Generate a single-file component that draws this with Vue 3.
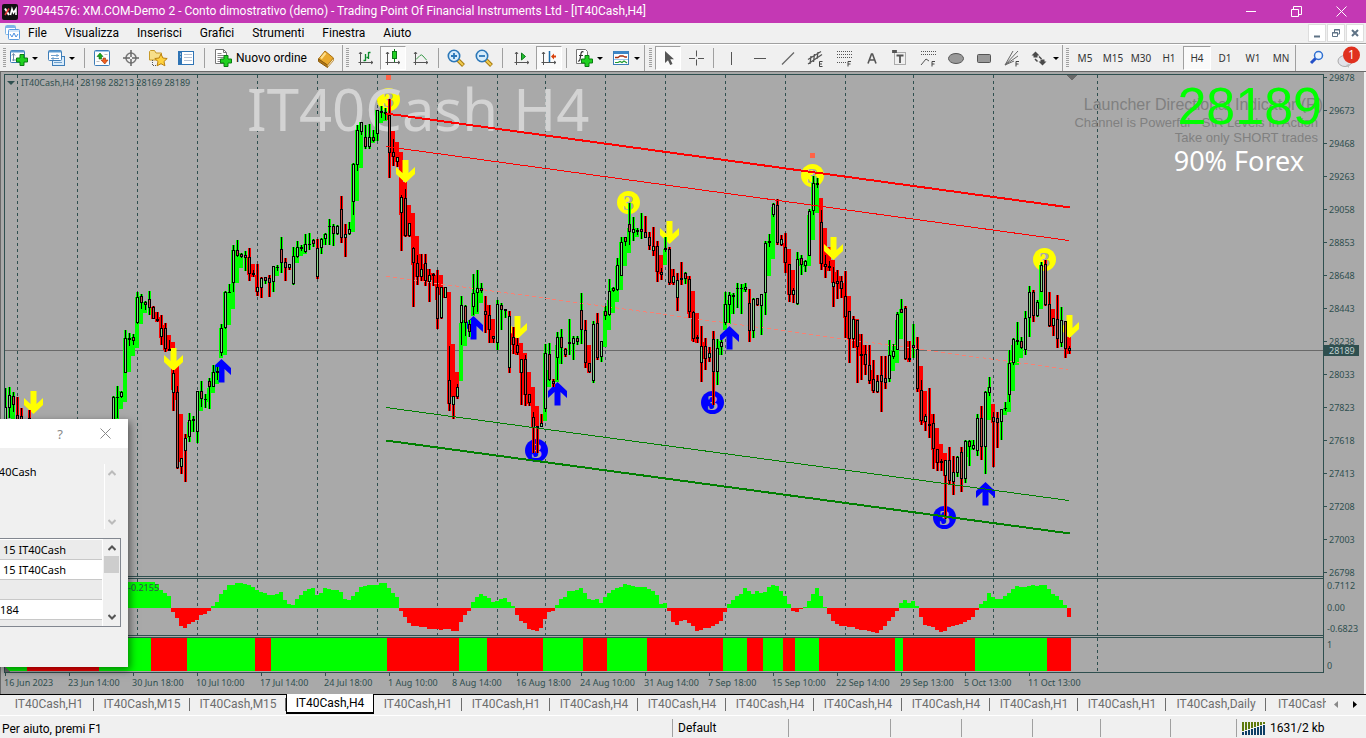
<script setup>
const menus = ['File', 'Visualizza', 'Inserisci', 'Grafici', 'Strumenti', 'Finestra', 'Aiuto']

const tools = [
  { k: 'grip', w: 8 },
  { k: 'icon', id: 'newchart', w: 31, drop: true, t: 'Nuovo grafico' },
  { k: 'icon', id: 'profiles', w: 43, drop: true, t: 'Profili' },
  { k: 'sep', w: 5 },
  { k: 'icon', id: 'market', w: 30, t: 'Market Watch' },
  { k: 'icon', id: 'target', w: 27, t: 'Finestra dati' },
  { k: 'icon', id: 'favs', w: 28, t: 'Navigatore' },
  { k: 'icon', id: 'terminal', w: 28, t: 'Terminale' },
  { k: 'sep', w: 9 },
  { k: 'icon', id: 'order', w: 102, label: 'Nuovo ordine', t: 'Nuovo ordine' },
  { k: 'icon', id: 'book', w: 31, t: 'MetaEditor' },
  { k: 'grip', w: 10, edge: true },
  { k: 'icon', id: 'bars', w: 28, t: 'Grafico a barre' },
  { k: 'icon', id: 'candles', w: 26, on: true, t: 'Candele' },
  { k: 'icon', id: 'line', w: 30, t: 'Grafico a linea' },
  { k: 'sep', w: 5 },
  { k: 'icon', id: 'zoomin', w: 29, t: 'Zoom avanti' },
  { k: 'icon', id: 'zoomout', w: 28, t: 'Zoom indietro' },
  { k: 'sep', w: 9 },
  { k: 'icon', id: 'scroll', w: 29, t: 'Scorrimento automatico' },
  { k: 'icon', id: 'shift', w: 26, on: true, t: 'Spostamento grafico' },
  { k: 'sep', w: 9 },
  { k: 'icon', id: 'indic', w: 35, drop: true, t: 'Indicatori' },
  { k: 'icon', id: 'templ', w: 38, drop: true, t: 'Modelli' },
  { k: 'grip', w: 11, edge: true },
  { k: 'icon', id: 'pointer', w: 26, on: true, t: 'Cursore' },
  { k: 'icon', id: 'cross', w: 29, t: 'Mirino' },
  { k: 'sep', w: 7 },
  { k: 'icon', id: 'vline', w: 29, t: 'Linea verticale' },
  { k: 'icon', id: 'hline', w: 28, t: 'Linea orizzontale' },
  { k: 'icon', id: 'trend', w: 28, t: 'Trendline' },
  { k: 'icon', id: 'channel', w: 28, t: 'Canale' },
  { k: 'icon', id: 'fibo', w: 28, t: 'Fibonacci' },
  { k: 'icon', id: 'texta', w: 28, t: 'Testo' },
  { k: 'icon', id: 'labelt', w: 28, t: 'Etichetta' },
  { k: 'icon', id: 'expans', w: 28, t: 'Espansione' },
  { k: 'icon', id: 'ellipse', w: 28, t: 'Ellisse' },
  { k: 'icon', id: 'rect', w: 28, t: 'Rettangolo' },
  { k: 'icon', id: 'fan', w: 28, t: 'Ventaglio' },
  { k: 'icon', id: 'arrows', w: 36, drop: true, t: 'Frecce' },
  { k: 'grip', w: 9, edge: true },
  ...['M5', 'M15', 'M30', 'H1', 'H4', 'D1', 'W1', 'MN'].map((p) => ({ k: 'period', label: p, w: 28, on: p === 'H4' })),
  { k: 'end', w: 3, edge: true },
]

const prices = [29878, 29673, 29468, 29263, 29058, 28853, 28648, 28443, 28238, 28033, 27823, 27618, 27413, 27208, 27003, 26798]
const times = ['16 Jun 2023', '23 Jun 14:00', '30 Jun 18:00', '10 Jul 10:00', '17 Jul 14:00', '24 Jul 18:00', '1 Aug 10:00', '8 Aug 14:00', '16 Aug 18:00', '24 Aug 10:00', '31 Aug 14:00', '7 Sep 18:00', '15 Sep 10:00', '22 Sep 14:00', '29 Sep 13:00', '5 Oct 13:00', '11 Oct 13:00']
const grid = [17, 77, 137, 197, 257, 317, 377, 437, 497, 545, 605, 665, 725, 785, 845, 913, 993, 1097]

// Each candle: high low bodyTop bodyBottom, u/d body + G/R trend, then optional trend band top bottom.
const series = [
  [5, `388 420 407 420 uG;387 418 395 408 uG;392 412 396 405 dG 396 419;397 420 415 420 dR;408 420 416 420 dR`],
  [29, `410 420 418 420 dR`],
  [113, `396 420 397 420 uG;386 418 397 398 dG 397 419;391 398 392 397 uG 391 409;330 373 338 373 uG 338 402;333 346 338 340 dG 338 372;334 345 337 341 dG 337 356;292 324 297 323 uG 297 348;294 309 296 303 dG 296 324;301 310 302 305 dG 302 313;291 315 299 308 dG;306 319 307 319 dR 307 319;312 322 319 321 dR 312 322;315 345 328 337 uR 317 338;323 352 328 349 dR 325 350;340 350 349 351 dR 335 351;370 411 373 393 uR 342 390;386 469 392 468 dR 365 400;458 474 458 467 uR 414 462;434 482 438 451 uR;413 442 420 437 uG 422 438;416 432 419 421 dG 420 432;391 443 391 432 uG;381 407 391 399 dG 391 411;394 408 399 400 dG;378 409 381 387 dG 388 402;365 387 372 387 uG 372 393;367 380 371 373 dG 371 384;324 356 328 353 uG 328 358;291 329 292 328 uG 292 355;284 293 292 293 dG 292 325;245 292 250 283 uG 250 309;240 257 250 256 dG 250 283;253 258 254 257 dG 253 268;251 271 255 258 dG;248 281 257 274 dR 257 275;270 277 273 275 dR 264 277;264 296 287 292 uR 275 292;277 298 278 288 uR;277 284 277 281 dG;275 297 278 283 dR;266 292 266 282 uG;265 271 267 268 dG 267 276;237 273 249 263 dG;258 281 262 268 dR;264 270 264 268 uR;247 285 256 284 uG;241 258 247 257 uG 248 263;245 251 247 249 dG 247 256;234 253 244 252 uG 244 254;233 250 244 245 dG;239 247 240 244 dG;239 279 248 277 uR;238 254 239 248 uG;233 245 234 239 uG 234 245;219 245 226 227 dG;224 246 226 234 dG;225 235 226 234 uG;196 243 209 238 dR;224 257 234 238 uR;222 235 229 234 uG;163 215 164 202 uG 164 232;125 171 130 165 uG 130 201;122 135 122 132 uG 122 168;125 149 137 147 dG;124 149 137 147 uG;130 142 137 141 dG 137 143;110 141 110 134 uG 110 141;106 118 111 113 dG 111 123;108 120 112 114 dG 112 121;99 178 115 153 dR 115 120;139 166 152 157 dR 131 157;157 167 157 162 uR 142 162;195 251 197 213 uR 152 215;189 237 198 236 dR 182 236;223 237 223 236 uR 205 236;247 307 248 263 dR 213 265;255 285 263 277 dR 236 277;254 281 269 277 uR 254 277;254 286 263 281 dR 264 281;269 302 275 282 uR 269 282;273 286 274 276 dR 273 280;270 329 287 319 dR 275 300;287 319 287 318 uR 275 295;287 298 287 298 uR 287 298;346 411 380 404 dR 292 404;396 419 396 405 uR 344 397;384 399 387 397 uR 372 397;296 345 305 323 uG 323 381;305 336 306 323 dG 320 346;320 337 324 332 dG;274 315 293 307 uG 293 316;270 312 288 293 uG 290 314;283 293 288 291 dG 288 303;296 333 311 315 dR;305 343 315 330 dR 305 330;336 343 336 339 dR 319 343;300 350 304 343 uG;303 330 305 310 dG;309 318 309 311 dG;311 373 316 368 uR;327 354 337 345 dR 327 345;338 355 345 353 dR 338 355;359 405 359 373 uR 343 373;355 406 359 395 dR 353 395;394 406 394 403 dR 372 404;412 453 417 428 dR 387 428;426 453 426 428 uR 406 426;414 427 423 427 uR;344 412 353 409 uG 353 421;343 381 354 380 dG 370 387;379 387 381 384 dR;332 380 337 358 uG 345 382;329 364 337 348 dG 337 364;348 357 349 355 dR;319 355 342 344 dG;336 360 338 344 uG;336 345 338 342 dG;293 344 310 330 dG;320 368 330 363 dR;363 373 363 372 dR 345 373;321 383 324 381 uG;313 360 323 358 dR;341 362 341 357 uG;306 320 311 316 dG 311 347;279 316 291 315 uG 300 330;287 292 288 291 dG 288 313;258 291 265 290 uG 266 302;237 276 242 276 uG 242 290;237 246 237 242 dG 237 266;203 245 224 232 dG 228 253;217 241 229 233 uG;228 235 230 232 dG 228 237;213 239 229 232 dG;216 238 232 238 dR;232 250 237 246 dR;227 256 246 251 uR;241 282 246 272 dR 246 272;268 280 272 275 dR 255 274;237 252 248 250 dG 249 265;247 285 249 283 dR;269 285 276 283 uR 269 284;273 311 280 298 uR;262 285 278 280 dR;272 284 273 279 dG;276 318 279 312 dR 276 314;311 342 312 339 dR 291 341;335 343 337 339 dR 313 343;326 382 346 363 uR;338 370 346 359 dR 342 359;347 362 353 358 uR;331 405 339 372 dR;339 385 348 372 uG;340 355 342 347 uG 341 355;292 325 304 323 uG 304 330;292 323 295 305 uG 300 324;293 314 295 297 dG 294 314;283 308 288 289 dG;284 314 288 289 dG;283 292 287 290 uG 284 292;289 342 303 331 dR;298 338 299 331 uG;298 306 298 305 dR;294 335 294 306 uG;241 315 243 293 uG;234 247 241 243 dG 241 276;203 217 204 215 uG 207 259;199 245 205 243 dR;235 246 239 245 uR;233 273 247 263 dR 243 263;264 302 264 295 dR 249 295;288 303 290 295 uR 270 295;252 305 259 304 uG;255 275 258 265 dG 258 266;260 272 261 266 uG 261 267;209 256 211 256 uG 215 266;176 215 183 211 uG 183 240;178 188 183 185 dG 183 213;210 270 222 264 dR 198 264;255 278 264 267 dR 228 267;261 271 266 268 dR 247 271;267 307 282 287 uR 260 283;270 299 281 284 dR 272 284;276 298 281 289 dR 276 289;271 338 296 317 dR 283 318;311 363 311 339 dR 296 340;316 348 319 339 uR;320 383 320 347 dR 319 348;334 380 354 356 dR 334 356;345 375 354 365 dR 345 365;345 384 365 381 dR;360 393 379 391 dR 370 391;375 393 381 392 uR;356 412 375 382 dR;356 389 378 383 dR;340 382 355 379 uG;344 359 351 357 uG 351 371;312 350 314 350 uG 320 363;299 313 309 313 dG 309 339;306 360 308 359 dR;341 362 358 360 dR 341 362;324 358 345 348 dG;337 392 349 389 dR;380 425 390 421 dR 366 422;414 431 416 422 uR 391 423;388 438 424 426 dR;414 469 423 449 dR 414 450;449 471 449 463 dR 428 463;459 471 461 463 dR 444 463;460 519 460 476 uR 453 476;447 485 460 481 dR;456 495 472 482 uR;456 477 457 473 uG;447 492 452 479 dR;440 483 441 479 uG;440 466 441 447 dG 441 457;440 450 445 449 uG 440 450;414 456 418 451 uG;406 460 418 447 dR;391 474 392 447 uG;377 396 387 393 uG 387 420;412 467 417 422 dR 404 423;412 448 418 423 dR;409 440 409 422 uG;402 411 408 409 dG 408 415;350 402 363 395 uG 363 412;338 365 339 363 uG 345 391;322 345 340 342 dG 341 365;337 349 341 348 dG 341 358;311 355 318 350 uG;286 337 292 318 uG;290 322 292 316 dR;300 317 302 316 uG;262 292 265 292 uG 265 309;260 306 264 305 dR;292 327 304 326 dR;318 336 318 326 uR 309 327;295 348 319 339 dR;307 347 320 343 uG;321 358 321 349 dR;346 354 348 351 dR 337 354`],
]
const candles = series.flatMap(([x0, text]) =>
  text.split(';').map((row, i) => {
    const f = row.trim().split(' ')
    const n = f.map(Number)
    return {
      x: x0 + i * 4,
      hi: n[0], lo: n[1], top: n[2], bot: n[3],
      body: f[4][0], trend: f[4][1],
      bandTop: n[5] || 0, bandBot: n[6] || 0,
    }
  }),
)
const bands = candles.filter((c) => c.bandTop)

const histGroups = [
  [127, [26, 26, 26, 26, 26, 26, 26, 24, 18, 15, 12, -4, -10, -18, -20, -16, -14, -12, -7, -6, -3, 2, 6, 14, 18, 23, 23, 25, 25, 24, 23, 21, 18, 16, 15, 13, 13, 14, 16, 8, 4, 3, 9, 13, 17, 19, 20, 13, 15, 20, 19, 18, 18, 16, 9, 8, 12, 16, 21, 22, 23, 23, 23, 25, 25, 20, 15, 11, -3, -9, -15, -18, -18, -19, -19, -21, -21, -21, -22, -21, -21]],
  [451, [-23, -23, -14, -7, -3, 6, 11, 14, 12, 10, 6, 7, 9, 10, 6, 2, -7, -13, -15, -21, -22, -23, -20, -11, -4, -3, 3, 9, 11, 17, 17, 18, 20, 15, 9, 8, 9, 5, 11, 15, 18, 20, 21, 24, 23, 22, 21, 21, 21, 19, 17, 13, 4, 5, -3, -14, -17, -13, -12, -15, -18, -23, -22, -20, -20, -18, -16, -13, -4, 4, 8, 12, 14, 20, 17, 14, 17, 15, 16, 21, 23, 22, 17, 12, 4, -3, -4, -1, 1, 7, 14, 20, 12, 1, -6, -13, -16, -18, -18, -19, -19, -21, -22, -22, -23, -24, -25, -22, -18, -13, -9, -3, 5, 8]],
  [907, [5, 7, 2, -9, -17, -18, -19, -22, -24, -23, -19, -18, -17, -16, -14, -12, -9, -2, 4, 7, 15, 11, 9, 9, 12, 15, 19, 22, 21, 21, 22, 23, 22, 23, 23, 19, 14, 12, 8, 3, -9]],
]
const hist = histGroups.flatMap(([x0, vals]) => vals.map((v, i) => ({ x: x0 + i * 4, v })))

const edges = [5, 27, 99, 151, 187, 255, 271, 387, 459, 487, 543, 583, 607, 647, 723, 747, 763, 783, 795, 819, 895, 903, 975, 1047, 1071]
const strip = edges.slice(0, -1).map((x, i) => ({ x, w: edges[i + 1] - x, up: i % 2 === 0 }))

const downs = [[33, 414], [173, 371], [405, 183], [517, 339], [669, 244], [833, 260], [1069, 338]]
const ups = [[221, 359], [473, 316], [557, 382], [729, 326], [985, 482]]
const tops = [[388, 99], [628, 202], [812, 175], [1044, 259]]
const lows = [[536, 450], [712, 402], [944, 517]]

const tabs = [
  { n: 'IT40Cash,H1', w: 90 }, { n: 'IT40Cash,M15', w: 96 }, { n: 'IT40Cash,M15', w: 96 },
  { n: 'IT40Cash,H4', w: 88, on: true }, { n: 'IT40Cash,H1', w: 88 }, { n: 'IT40Cash,H1', w: 88 },
  { n: 'IT40Cash,H4', w: 88 }, { n: 'IT40Cash,H4', w: 88 }, { n: 'IT40Cash,H4', w: 88 },
  { n: 'IT40Cash,H4', w: 88 }, { n: 'IT40Cash,H4', w: 88 }, { n: 'IT40Cash,H1', w: 88 },
  { n: 'IT40Cash,H1', w: 88 }, { n: 'IT40Cash,Daily', w: 100 },
]
const cells = [116, 102, 71, 71, 68, 70, 66]
</script>

<template>
  <div class="app">
    <svg class="defs" aria-hidden="true">
      <symbol id="plus" viewBox="0 0 12 12"><path d="M4 .5h4v3.500h3.500v4H8v3.500H4V8H.5V4H4z" fill="#1fd01f" stroke="#0a7d12" /></symbol>
      <symbol id="newchart" viewBox="0 0 20 20">
        <rect x="1.500" y="2.500" width="14" height="12" rx="1" fill="#fff" stroke="#3d7db8" /><path d="M2 3.500h13" stroke="#5b9ad0" stroke-width="2" />
        <path d="M4.500 6v7M3 7.500l1.500-2L6 7.500M3 12h8M10 10.500l1.500 1.500-1.500 1.500" stroke="#6f8da8" fill="none" />
        <use href="#plus" x="7" y="6" width="12" height="12" />
      </symbol>
      <symbol id="profiles" viewBox="0 0 20 20">
        <rect x="6.500" y="8.500" width="12" height="9" fill="#d9ebfa" stroke="#3d7db8" />
        <rect x="2.500" y="2.500" width="13" height="10" rx="1" fill="#fff" stroke="#3d7db8" /><path d="M3 3.500h12" stroke="#5b9ad0" stroke-width="2" />
        <path d="M5 7.500h8M5 10.500h8M11 6v3M7 9v3" stroke="#6fa0cc" /><path d="M8 14.500h8" stroke="#6fa0cc" />
      </symbol>
      <symbol id="market" viewBox="0 0 20 20">
        <rect x="2.500" y="2.500" width="15" height="15" rx="1" fill="#fdfdfd" stroke="#3d7db8" /><path d="M3 3.500h14" stroke="#9cc6ea" />
        <path d="M5 8.500L8 5l3 3.500H9.500V11H7V8.500z" fill="#18a818" stroke="#0b6b0b" stroke-width=".6" /><path d="M9 12h2v-2h2.500v2H16l-3.200 4z" fill="#f06020" stroke="#a03008" stroke-width=".6" />
        <path d="M4.500 13.500h3M12.500 6.500h3" stroke="#bbb" />
      </symbol>
      <symbol id="target" viewBox="0 0 20 20"><circle cx="10" cy="10" r="5" fill="none" stroke="#777" stroke-width="1.500" /><path d="M10 2v7M10 11v7M2 10h7M11 10h7" stroke="#666" stroke-width="1.500" /></symbol>
      <symbol id="favs" viewBox="0 0 20 20">
        <path d="M1.500 3.500V12h12V5H8L6.500 2.500h-4z" fill="#f7df8a" stroke="#c79a28" /><path d="M4.500 12v5.500h4" fill="none" stroke="#555" stroke-dasharray="1 1" />
        <path d="M13 6l1.900 4 4.300.500-3.200 3 .9 4.300L13 15.700l-3.900 2.100.9-4.300-3.200-3 4.300-.500z" fill="#ffd23e" stroke="#b97f10" />
      </symbol>
      <symbol id="terminal" viewBox="0 0 20 20"><rect x="2.500" y="3.500" width="15" height="13" fill="#fff" stroke="#2f74b5" /><path d="M3 4h3v12H3z" fill="#2f74b5" /><path d="M8 6.500h8M8 9.500h8M8 12.500h8" stroke="#b6c2d4" /><path d="M4 6h1M4 9h1" stroke="#fff" /></symbol>
      <symbol id="order" viewBox="0 0 20 20">
        <path d="M2.500 1.500h8l3 3v11h-11z" fill="#fff" stroke="#777" /><path d="M10.500 1.500v3h3" fill="none" stroke="#777" /><path d="M4.500 5.500h4M4.500 7.500h7M4.500 9.500h7M4.500 11.500h4M4.500 13.500h3" stroke="#888" />
        <use href="#plus" x="7" y="7" width="12" height="12" />
      </symbol>
      <symbol id="book" viewBox="0 0 20 20"><path d="M1.500 11L8 3l8.500 7-6 7.500z" fill="#e9a92d" stroke="#a87012" /><path d="M1.500 11v2.500l9 6V17z" fill="#b27815" stroke="#8a5a0c" /><path d="M10.500 17.200l6-7.200v2.500l-6 7z" fill="#f5e3b5" stroke="#a87012" stroke-width=".7" /><path d="M4 10.500L8.500 5" stroke="#ffe08a" stroke-width="2" /></symbol>
      <symbol id="axes" viewBox="0 0 20 20"><path d="M4.500 4v13M2.500 14.500H17M3 6l1.500-2L6 6M15 13l2 1.500-2 1.500" fill="none" stroke="#555" /></symbol>
      <symbol id="bars" viewBox="0 0 20 20"><use href="#axes" /><path d="M9.500 6v7M7.500 12.500h2M12.500 4v7M12.500 4.500h2M10.500 9.500h2" stroke="#0b8a2a" stroke-width="1.300" /></symbol>
      <symbol id="candles" viewBox="0 0 20 20"><use href="#axes" /><path d="M11.500 1v13" stroke="#0b7a1a" /><rect x="9.500" y="3.500" width="4" height="7" fill="#22d022" stroke="#0b7a1a" /></symbol>
      <symbol id="line" viewBox="0 0 20 20"><use href="#axes" /><path d="M5 11.500l4-4q1.500-1.500 3 .500l3.500 4" fill="none" stroke="#3a9a4a" /></symbol>
      <symbol id="glass" viewBox="0 0 20 20"><path d="M12 12l5.500 5.500" stroke="#a87a10" stroke-width="4" /><path d="M12 12l5 5" stroke="#f0cc50" stroke-width="2" /><circle cx="8" cy="8" r="5.700" fill="#d6ecfb" stroke="#2b77b8" stroke-width="1.600" /></symbol>
      <symbol id="zoomin" viewBox="0 0 20 20"><use href="#glass" /><path d="M5 8h6M8 5v6" stroke="#2b77b8" stroke-width="1.800" /></symbol>
      <symbol id="zoomout" viewBox="0 0 20 20"><use href="#glass" /><path d="M5 8h6" stroke="#2b77b8" stroke-width="1.800" /></symbol>
      <symbol id="scroll" viewBox="0 0 20 20"><use href="#axes" /><path d="M9.500 5l4 3.500-4 3.500z" fill="#22c02f" stroke="#0b7a1a" /></symbol>
      <symbol id="shift" viewBox="0 0 20 20"><use href="#axes" /><path d="M10.500 3v11" stroke="#1b6aa8" stroke-width="1.500" /><path d="M12 8.500l3-3v2h2v2h-2v2z" fill="#d8410c" /></symbol>
      <symbol id="indic" viewBox="0 0 20 20">
        <path d="M2.500 1.500h9l2 2v12h-11z" fill="#fff" stroke="#777" /><path d="M9.500 4q-2-1-2.500 1.500l-1 6q-.500 2-2 1.500M5 7.500h4" fill="none" stroke="#333" stroke-width="1.200" />
        <use href="#plus" x="7" y="7" width="12" height="12" />
      </symbol>
      <symbol id="templ" viewBox="0 0 20 20"><rect x="2.500" y="3.500" width="15" height="13" fill="#fff" stroke="#3d7db8" /><path d="M3 4.500h14" stroke="#3d86c6" stroke-width="3" /><path d="M3 11.500h14" stroke="#9cc6ea" /><path d="M4 9.500h3l2-1.500h3l2 1h2" fill="none" stroke="#a83010" stroke-width="1.300" /><path d="M4 14.500h3l2-1 2 1 2-1.500 3 2" fill="none" stroke="#1f9a2f" stroke-width="1.200" /></symbol>
      <symbol id="pointer" viewBox="0 0 20 20"><path d="M7 3v12l3-2.800 2.200 4.800 2.300-1-2.200-4.700H16z" fill="#555" /></symbol>
      <symbol id="cross" viewBox="0 0 20 20"><path d="M10.500 2.500v6M10.500 11.500v6M3 10.500h6M12 10.500h6" stroke="#555" /></symbol>
      <symbol id="vline" viewBox="0 0 20 20"><path d="M9.500 4v13" stroke="#555" /></symbol>
      <symbol id="hline" viewBox="0 0 20 20"><path d="M4 10.500h12" stroke="#555" /></symbol>
      <symbol id="trend" viewBox="0 0 20 20"><path d="M4 16.500L16 4.500" stroke="#666" stroke-width="1.300" /></symbol>
      <symbol id="channel" viewBox="0 0 20 20"><path d="M2 11.500L15 3.500M2 16L16 6.500M5 8l-1 8M8.500 6l-1 8M12 4l-1 7" stroke="#555" stroke-width="1.300" /><path d="M16.500 13.500h-3v5h3M13.500 16h2.500" fill="none" stroke="#444" /></symbol>
      <symbol id="dots" viewBox="0 0 20 20"><path d="M3 3.500h15M3 6.500h15M3 9.500h15" stroke="#555" stroke-dasharray="1 1" /></symbol>
      <symbol id="fibo" viewBox="0 0 20 20"><use href="#dots" /><path d="M3 14.500h9" stroke="#555" stroke-dasharray="1 1" /><path d="M17 13.500h-3v5M14 16h2.500" fill="none" stroke="#444" /></symbol>
      <symbol id="texta" viewBox="0 0 20 20"><path d="M6 15.500L9.500 6h1L14 15.500M7.500 12h5" fill="none" stroke="#555" stroke-width="1.600" /></symbol>
      <symbol id="labelt" viewBox="0 0 20 20"><rect x="4.500" y="4.500" width="11" height="12" fill="none" stroke="#666" stroke-dasharray="1 1" /><path d="M6.500 7.500h7M10 7v8M3 3h3v1H3z" stroke="#555" stroke-width="1.800" /></symbol>
      <symbol id="expans" viewBox="0 0 20 20"><path d="M3 3.500h15M3 6.500h15" stroke="#555" stroke-dasharray="1 1" /><path d="M3 17l5-6 3 2" fill="none" stroke="#555" /><path d="M17 13.500h-3v5M14 16h2.500" fill="none" stroke="#444" /></symbol>
      <symbol id="ellipse" viewBox="0 0 20 20"><ellipse cx="10" cy="10.500" rx="7.500" ry="5" fill="#999" stroke="#555" /></symbol>
      <symbol id="rect" viewBox="0 0 20 20"><rect x="3.500" y="6.500" width="13" height="8" rx="1" fill="#999" stroke="#555" /></symbol>
      <symbol id="fan" viewBox="0 0 20 20"><path d="M3 17L16 3M3 17L11 3M3 17L16 8M3 17l9-4" stroke="#666" /><path d="M17 13.500h-3v5M14 16h2.500" fill="none" stroke="#444" /></symbol>
      <symbol id="arrows" viewBox="0 0 20 20"><path d="M5.500 3.500L9.500 7.500H7.500v2h-4v-2h-2zM12.500 17.500l-4-4h2v-2h4v2h2z" fill="#4a4a4a" /><path d="M5 11l2.500 2.500M9 8.500l2.500 2.500" stroke="#4a4a4a" stroke-width="1.500" /></symbol>
    </svg>

    <header class="title">
      <svg class="logo" width="16" height="16" viewBox="0 0 16 16"><rect width="16" height="16" rx="2" fill="#111" /><path d="M3 4.500l4 6.500" stroke="#fff" stroke-width="2" /><path d="M7 4.500L3 11" stroke="#e23b3b" stroke-width="1.600" /><path d="M8.500 11L10 5l1.500 4L14 5v6" fill="none" stroke="#fff" stroke-width="1.600" /></svg>
      <h1>79044576: XM.COM-Demo 2 - Conto dimostrativo (demo) - Trading Point Of Financial Instruments Ltd - [IT40Cash,H4]</h1>
      <button class="win" aria-label="Riduci"><svg width="11" height="11"><path d="M0 5.500h10" stroke="#fff" /></svg></button>
      <button class="win" aria-label="Ripristina"><svg width="11" height="11"><path d="M.5 3.500h7v7h-7zM2.500 3V.5h8v8H8" fill="none" stroke="#fff" /></svg></button>
      <button class="win" aria-label="Chiudi"><svg width="11" height="11"><path d="M.5.5l10 10M10.500.5l-10 10" stroke="#fff" /></svg></button>
    </header>

    <nav class="menu">
      <svg class="mdi-icon" width="16" height="16"><rect x=".5" y=".5" width="10" height="9" rx="1" fill="#fff" stroke="#7db4e6" /><path d="M1 2h9" stroke="#7db4e6" stroke-width="2" /><rect x="3.500" y="4.500" width="11" height="10" rx="1" fill="#fff" stroke="#5a9be0" /><path d="M4 6h10" stroke="#a9d0f5" /><path d="M5 9l2 3 2-4 2 4 2-3" fill="none" stroke="#4a90e2" /></svg>
      <a v-for="m in menus" :key="m" href="#">{{ m }}</a>
      <span class="spring"></span>
      <button class="mdi" aria-label="Riduci grafico"><svg width="10" height="10"><path d="M2 8.500h6" stroke="#5f7386" stroke-width="2" /></svg></button>
      <button class="mdi" aria-label="Ripristina grafico"><svg width="10" height="10"><path d="M1.500 4.500h5v4h-5zM3.500 4V1.500h5V6H7" fill="none" stroke="#5f7386" /><path d="M1 5h6M3 2h6" stroke="#5f7386" /></svg></button>
      <button class="mdi" aria-label="Chiudi grafico"><svg width="10" height="10"><path d="M2 2l6 6M8 2L2 8" stroke="#5f7386" stroke-width="2" /></svg></button>
    </nav>

    <div class="toolbar">
      <template v-for="(t, i) in tools" :key="i">
        <button v-if="t.k === 'icon' || t.k === 'period'" class="tool" :class="{ on: t.on, period: t.k === 'period' }" :style="{ width: t.w + 'px' }" :aria-label="t.t || t.label">
          <svg v-if="t.k === 'icon'" width="20" height="20"><use :href="'#' + t.id" /></svg>
          <span v-if="t.label">{{ t.label }}</span>
          <i v-if="t.drop" class="caret"></i>
        </button>
        <span v-else :class="[t.k, { edge: t.edge }]" :style="{ width: t.w + 'px' }"></span>
      </template>
      <button class="tool search" aria-label="Cerca"><svg width="16" height="16"><circle cx="9.500" cy="5.500" r="4" fill="#eaf4ff" stroke="#2f6fd0" stroke-width="1.500" /><path d="M6.500 8.500L2 13" stroke="#2450c8" stroke-width="3" /></svg></button>
      <button class="tool alerts" aria-label="Notifiche"><svg width="24" height="24"><ellipse cx="8" cy="15" rx="7" ry="5.500" fill="#e2e2e8" stroke="#aaa" /><path d="M9 19l3 3 0-4z" fill="#bbb" /><circle cx="14.500" cy="9" r="8.500" fill="#e0301e" /></svg><b>1</b></button>
    </div>

    <main class="chart">
      <div class="plot">
        <svg class="canvas" shape-rendering="crispEdges">
          <g transform="translate(-5,-75)">
            <g class="grid"><path v-for="x in grid" :key="x" :d="`M${x}.500 75V576M${x}.500 579V635M${x}.500 638V672`" /></g>
            <g>
              <g v-for="(p, i) in tops" :key="'t' + i" shape-rendering="auto"><circle :cx="p[0] + .5" :cy="p[1] + .5" r="11.500" fill="#ff0" /><text class="num" :x="p[0] + .5" :y="p[1] + 8">3</text></g>
              <g v-for="(p, i) in lows" :key="'l' + i" shape-rendering="auto"><circle :cx="p[0] + .5" :cy="p[1] + .5" r="11.500" fill="#00f" /><text class="num" :x="p[0] + .5" :y="p[1] + 8">3</text></g>
              <text class="mark" x="247" y="131">IT40Cash H4</text>
            </g>
            <path d="M5 350.500H2000" stroke="#696969" />
            <path d="M386 75h5v5h-5zM810 153h5v5h-5z" fill="#ff6347" />
            <rect v-for="(c, i) in bands" :key="'b' + i" :x="c.x - 2" :y="c.bandTop" width="4" :height="c.bandBot - c.bandTop" :class="c.trend" />
            <g fill="#ff0" shape-rendering="auto"><path v-for="(p, i) in downs" :key="i" :transform="`translate(${p[0] + .5},${p[1]})`" d="M-3-23h6v13l6.500-6v7L0 0l-9.500-9v-7l6.500 6z" /></g>
            <g fill="#00f" shape-rendering="auto"><path v-for="(p, i) in ups" :key="i" :transform="`translate(${p[0] + .5},${p[1]})`" d="M-3 23.500h6V10l6.500 6V9L0 0l-9.500 9v7l6.500-6z" /></g>
            <rect v-for="(c, i) in candles" :key="'w' + i" :x="c.x - 1" :y="c.hi" width="3" :height="c.lo - c.hi" :class="c.trend" />
            <path d="M386 276.500L1068 369.500" stroke="#fa8072" stroke-dasharray="4 3" />
            <template v-for="(c, i) in candles" :key="'c' + i">
              <rect :x="c.x" :y="c.hi" width="1" :height="c.lo - c.hi" />
              <rect :x="c.x - 1" :y="c.top" width="3" :height="Math.max(1, c.bot - c.top)" />
              <rect v-if="c.bot - c.top > 2" :x="c.x" :y="c.top + 1" width="1" :height="c.bot - c.top - 2" :class="c.body" />
            </template>
            <path d="M386 113.500L1070 207.500" stroke="#f00" stroke-width="2" />
            <path d="M386 146.500L1069 240.500" stroke="#f00" />
            <path d="M386 407.500L1069 500.500" stroke="#008000" />
            <path d="M386 440.500L1070 533.500" stroke="#008000" stroke-width="2" />
            <path d="M1066 75h11l-5.500 5.500z" fill="#696969" />
            <rect v-for="(h, i) in hist" :key="'h' + i" :x="h.x" :y="h.v > 0 ? 608 - h.v : 608" width="4" :height="Math.abs(h.v)" :class="h.v > 0 ? 'G' : 'R'" />
            <rect v-for="(s, i) in strip" :key="'s' + i" :x="s.x" y="638" :width="s.w" height="33" :class="s.up ? 'G' : 'R'" />
            <path d="M5 576.500H2000M5 578.500H2000M5 635.500H2000M5 637.500H2000" stroke="#2f4f4f" />
            <path d="M5 667l5 5H5z" fill="#696969" />
          </g>
        </svg>
        <div class="symbol"><i class="caret"></i><span>IT40Cash,H4</span><span>28198 28213 28169 28189</span></div>
        <span class="reading">-0.2155</span>
        <div class="notes">
          <p class="launcher">Launcher Directional Indicator (R)</p>
          <p>Channel is Powerful - S\R Levels In Action</p>
          <p>Take only SHORT trades</p>
        </div>
        <strong class="quote">28189</strong>
        <span class="forex">90% Forex</span>
      </div>
      <div class="scale">
        <span v-for="p in prices" :key="p" class="price">{{ p }}</span>
        <span class="lvl l1">0.7112</span><span class="lvl l2">0.00</span><span class="lvl l3">-0.6823</span><span class="lvl l4">1</span><span class="lvl l5">0</span>
        <b class="now">28189</b>
      </div>
      <div class="times"><span v-for="t in times" :key="t">{{ t }}</span></div>
    </main>

    <section class="dialog" aria-label="Ordine">
      <div class="dlg-head"><button aria-label="Aiuto">?</button><button aria-label="Chiudi finestra"><svg width="11" height="11"><path d="M.5.5l10 10M10.500.5l-10 10" stroke="#888" /></svg></button></div>
      <div class="dlg-info"><span>IT40Cash</span><div class="dlg-arrows"><svg width="8" height="6"><path d="M.5 5L4 1.500 7.500 5" fill="none" stroke="#bbb" stroke-width="2" /></svg><svg width="8" height="6"><path d="M.5 1L4 4.500 7.500 1" fill="none" stroke="#bbb" stroke-width="2" /></svg></div></div>
      <div class="dlg-list">
        <ul><li>15 IT40Cash</li><li>15 IT40Cash</li><li></li><li class="flush">184</li><li></li></ul>
        <div class="bar"><svg width="8" height="6"><path d="M.5 5L4 1.500 7.500 5" fill="none" stroke="#555" stroke-width="2" /></svg><i></i><svg width="8" height="6"><path d="M.5 1L4 4.500 7.500 1" fill="none" stroke="#555" stroke-width="2" /></svg></div>
      </div>
    </section>

    <div class="tabs">
      <button v-for="(t, i) in tabs" :key="i" :class="{ on: t.on }" :style="{ width: t.w + 'px' }">{{ t.n }}</button>
      <button class="last">IT40Cash,</button>
      <button class="nudge" aria-label="Indietro"><svg width="4" height="7"><path d="M4 0v7L0 3.500z" fill="#888" /></svg></button>
      <button class="nudge" aria-label="Avanti"><svg width="4" height="7"><path d="M0 0v7l4-3.500z" fill="#000" /></svg></button>
    </div>

    <footer class="status">
      <span class="help">Per aiuto, premi F1</span>
      <span v-for="(w, i) in cells" :key="i" class="cell" :style="{ width: w + 'px' }">{{ i === 0 ? 'Default' : '' }}</span>
      <span class="cell net">
        <svg width="24" height="13"><template v-for="n in 8" :key="n"><rect :x="(n - 1) * 3" y="0" width="2" :height="10 - n" fill="#5f7a0c" /><rect :x="(n - 1) * 3" :y="11 - n" width="2" :height="2 + n" fill="#0d3f66" /></template></svg>
        1631/2 kb
      </span>
    </footer>
  </div>
</template>

<style>
html, body, #app { height: 100%; }
body { overflow: hidden; }
</style>

<style scoped>
.app { position: relative; display: flex; flex-direction: column; min-height: 100vh; background: #f0f0f0; color: #000; font: 12px/16px Roboto, "Open Sans", sans-serif; overflow: hidden; }
button { border: 0; padding: 0; margin: 0; background: none; font: inherit; color: inherit; }
.defs { position: absolute; width: 0; height: 0; }
.title { display: flex; align-items: center; height: 23px; background: #c438b4; color: #fff; padding-left: 2px; }
h1 { flex: 1; margin: 0 0 0 5px; font: 400 12px/23px Roboto, "Open Sans", sans-serif; white-space: nowrap; }
.win { width: 45px; height: 20px; display: grid; place-items: center; }
.win:last-child { margin-right: 2px; }
.menu { display: flex; align-items: center; height: 20px; padding: 0 2px 0 5px; border-bottom: 1px solid #a0a0a0; }
.menu a { color: #000; text-decoration: none; margin-right: 18px; }
.mdi-icon { margin-right: 7px; }
.spring { flex: 1; }
.mdi { width: 18px; height: 18px; margin-left: 1px; background: #fff; border: 1px solid #ddd; display: grid; place-items: center; }
.toolbar { display: flex; align-items: center; height: 27px; box-sizing: border-box; border-top: 1px solid #fff; }
.tool { height: 24px; flex: none; display: flex; align-items: center; justify-content: center; gap: 3px; box-sizing: border-box; white-space: nowrap; }
.tool.on { background: #fafafa; border: 1px solid #a0a0a0; border-right-color: #fff; border-bottom-color: #fff; }
.period { font: 10px/14px "Noto Sans", sans-serif; color: #333; }
.caret { width: 0; height: 0; border: solid transparent; border-width: 3px 3px 0; border-top-color: #000; }
.grip, .sep, .end { flex: none; height: 26px; display: flex; align-items: center; justify-content: center; box-sizing: border-box; }
.edge { border-left: 1px solid #a0a0a0; }
.grip::before { content: ""; width: 3px; height: 20px; background: repeating-linear-gradient(#a0a0a0 0 1px, #f0f0f0 1px 2px); }
.sep::before { content: ""; width: 1px; height: 20px; background: #a0a0a0; }
.search { width: 38px; }
.alerts { position: relative; width: 26px; }
.alerts b { position: absolute; left: 12px; top: 1px; font: 12px/16px "Open Sans", sans-serif; color: #fff; }
.chart { flex: 1; display: grid; grid-template-columns: 1fr 42px; grid-template-rows: auto 1fr; background: #a9a9a9; border: solid #696969; border-width: 1px 0 0 1px; box-shadow: inset -2px 0 #f0f0f0; padding: 2px 0 0 3px; color: #2f4f4f; font: 9px/9px "Noto Sans", sans-serif; }
.plot { position: relative; height: 597px; border: 1px solid #2f4f4f; overflow: hidden; }
.canvas { display: block; width: 100%; height: 100%; }
.grid { stroke: #2f4f4f; fill: none; stroke-dasharray: 3 3; }
.G { fill: #0f0; }
.R { fill: #f00; }
.u { fill: #86d686; }
.d { fill: #c05048; }
.num { font: bold 22px "Liberation Serif", serif; fill: #a9a9a9; text-anchor: middle; }
.mark { font: 58px "Noto Sans", sans-serif; fill: #d3d3d3; }
.symbol { position: absolute; left: 2px; top: 3px; display: flex; align-items: center; gap: 6px; white-space: nowrap; }
.symbol .caret { border-width: 4px 4px 0; border-top-color: #2f4f4f; }
.reading { position: absolute; left: 123px; top: 508px; }
.notes { position: absolute; right: 5px; top: 20px; text-align: right; color: #808080; font: 13px/15px "Liberation Sans", Arial, sans-serif; white-space: nowrap; }
.notes p { margin: 0; }
.notes .launcher { font-size: 16px; line-height: 20px; margin-right: -5px; }
.quote { position: absolute; right: 1px; top: 1px; font: 52px/60px "Liberation Sans", Arial, sans-serif; color: #0f0; }
.forex { position: absolute; right: 19px; top: 71px; font: 27px/30px "Noto Sans", sans-serif; color: #fff; }
.scale { position: relative; display: flex; flex-direction: column; gap: 24px; white-space: nowrap; height: 599px; }
.price { display: flex; align-items: center; }
.price::before { content: ""; width: 3px; height: 1px; background: #2f4f4f; margin-right: 2px; }
.price:first-child { margin-top: -1px; }
.lvl { margin-left: 3px; }
.l1 { margin-top: -20px; }
.l2 { margin-top: -11px; }
.l3 { margin-top: -12px; }
.l4 { margin-top: -17px; }
.l5 { margin-top: -12px; }
.now { position: absolute; left: 0; top: 271px; width: 30px; padding: 1px 0 1px 5px; background: #2f4f4f; color: #c0d0d0; font-weight: 400; }
.times { grid-column: 1 / -1; display: flex; }
.times span { width: 64px; flex: none; white-space: nowrap; }
.times span::before { content: ""; display: block; width: 1px; height: 3px; background: #2f4f4f; margin: 0 0 2px 1px; }
.dialog { position: absolute; left: 0; top: 419px; width: 128px; height: 248px; background: #f0f0f0; box-shadow: 2px 3px 8px rgba(0, 0, 0, .5); font: 11px/16px "Noto Sans", sans-serif; overflow: hidden; }
.dlg-head { display: flex; justify-content: flex-end; align-items: center; height: 29px; background: #fff; padding-right: 17px; gap: 37px; color: #888; font-size: 13px; }
.dlg-info { display: flex; justify-content: space-between; height: 65px; margin: 16px 12px 9px -11px; }
.dlg-arrows { display: flex; flex-direction: column; justify-content: space-between; padding: 6px 0 4px 3px; border-left: 1px solid #fff; }
.dlg-list { display: flex; width: 120px; height: 87px; border: 1px solid #828790; border-left: 0; background: #fff; overflow: hidden; }
ul { flex: 1; list-style: none; margin: 1px 0 0; padding: 0; }
li { height: 19px; line-height: 19px; border-bottom: 1px solid #c8c8c8; padding-left: 3px; background: #fff; }
li:nth-child(odd) { background: #ebebeb; }
li.flush { padding-left: 0; }
.bar { width: 18px; background: #f0f0f0; display: flex; flex-direction: column; align-items: center; padding: 6px 0 6px; box-sizing: border-box; border-left: 1px solid #fff; }
.bar i { width: 15px; height: 17px; background: #cdcdcd; margin: 5px 0 auto; }
.tabs { display: flex; height: 19px; border-top: 1px solid #000; padding: 0 2px 0 4px; align-items: stretch; color: #6d6d6d; }
.tabs button { flex: none; position: relative; box-sizing: border-box; line-height: 19px; white-space: nowrap; text-align: center; }
.tabs button:not(.nudge)::after { content: ""; position: absolute; right: 0; top: 3px; width: 1px; height: 13px; background: #6d6d6d; }
.tabs button.on { margin-top: -1px; background: #fff; color: #000; border: solid #000; border-width: 0 1px 2px; }
.tabs button.on::after, .tabs .last::after { display: none; }
.tabs .last { flex: 1 1 0; min-width: 0; overflow: hidden; text-align: left; padding-left: 12px; }
.tabs .nudge { width: 19px; display: grid; place-items: center; }
.status { display: flex; align-items: center; height: 22px; border-top: 1px solid #fff; margin-top: 1px; white-space: nowrap; }
.help { flex: 1; padding: 3px 0 0 2px; }
.cell { box-sizing: border-box; flex: none; height: 18px; border-left: 1px solid #a0a0a0; padding: 1px 0 0 5px; margin-top: 1px; }
.net { width: 130px; display: flex; align-items: center; gap: 4px; }
</style>
